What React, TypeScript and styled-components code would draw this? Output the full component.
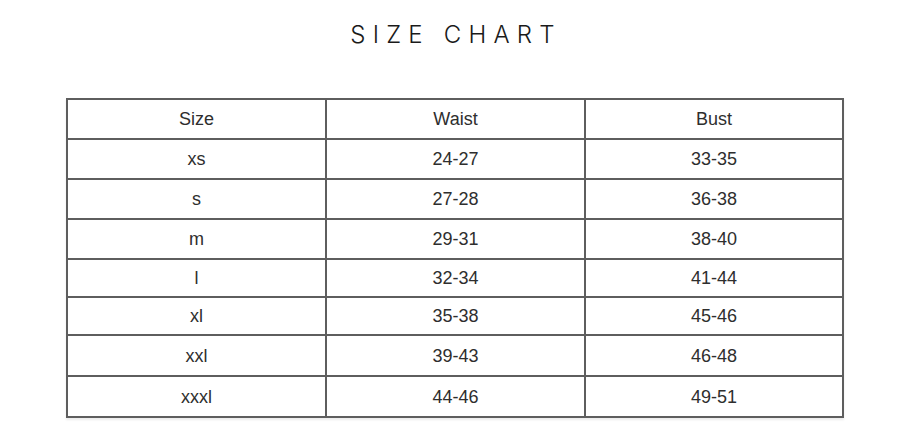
import React from "react";
import styled, { createGlobalStyle } from "styled-components";

const Global = createGlobalStyle`
  html, body { margin: 0; padding: 0; background: #fff; }
  body { width: 920px; height: 431px; overflow: hidden; }
`;

const Page = styled.div`
  width: 920px;
  height: 431px;
  display: flex;
  flex-direction: column;
  align-items: center;
`;

const Title = styled.h1`
  margin: 21px 8px 0 0;
  font-family: "Inter", "Liberation Sans", sans-serif;
  font-weight: 300;
  font-size: 24px;
  line-height: 28px;
  letter-spacing: 0.3em;
  color: #1a1a1a;
`;

const Table = styled.div`
  align-self: flex-start;
  margin: 49px 0 0 66px;
  display: grid;
  grid-template-columns: 259px 259px 258px;
  border-top: 2px solid #5e5e5e;
  border-left: 2px solid #5e5e5e;
  box-shadow: 0 2px 2px rgba(0, 0, 0, 0.08);
`;

const Cell = styled.div<{ $h: number }>`
  height: ${(p) => p.$h}px;
  box-sizing: border-box;
  border-right: 2px solid #5e5e5e;
  border-bottom: 2px solid #5e5e5e;
  display: flex;
  align-items: center;
  justify-content: center;
  font-family: "Liberation Sans", Arial, sans-serif;
  font-size: 18px;
  color: #2e2e2e;
  padding-top: 1px;
`;

const rows: [string, string, string][] = [
  ["Size", "Waist", "Bust"],
  ["xs", "24-27", "33-35"],
  ["s", "27-28", "36-38"],
  ["m", "29-31", "38-40"],
  ["l", "32-34", "41-44"],
  ["xl", "35-38", "45-46"],
  ["xxl", "39-43", "46-48"],
  ["xxxl", "44-46", "49-51"],
];

const heights = [40, 40, 40, 40, 38, 38, 41, 41];

export default function App() {
  return (
    <>
      <Global />
      <Page>
        <Title>SIZE CHART</Title>
        <Table>
          {rows.map((r, i) =>
            r.map((c, j) => (
              <Cell key={`${i}-${j}`} $h={heights[i]}>
                {c}
              </Cell>
            ))
          )}
        </Table>
      </Page>
    </>
  );
}
